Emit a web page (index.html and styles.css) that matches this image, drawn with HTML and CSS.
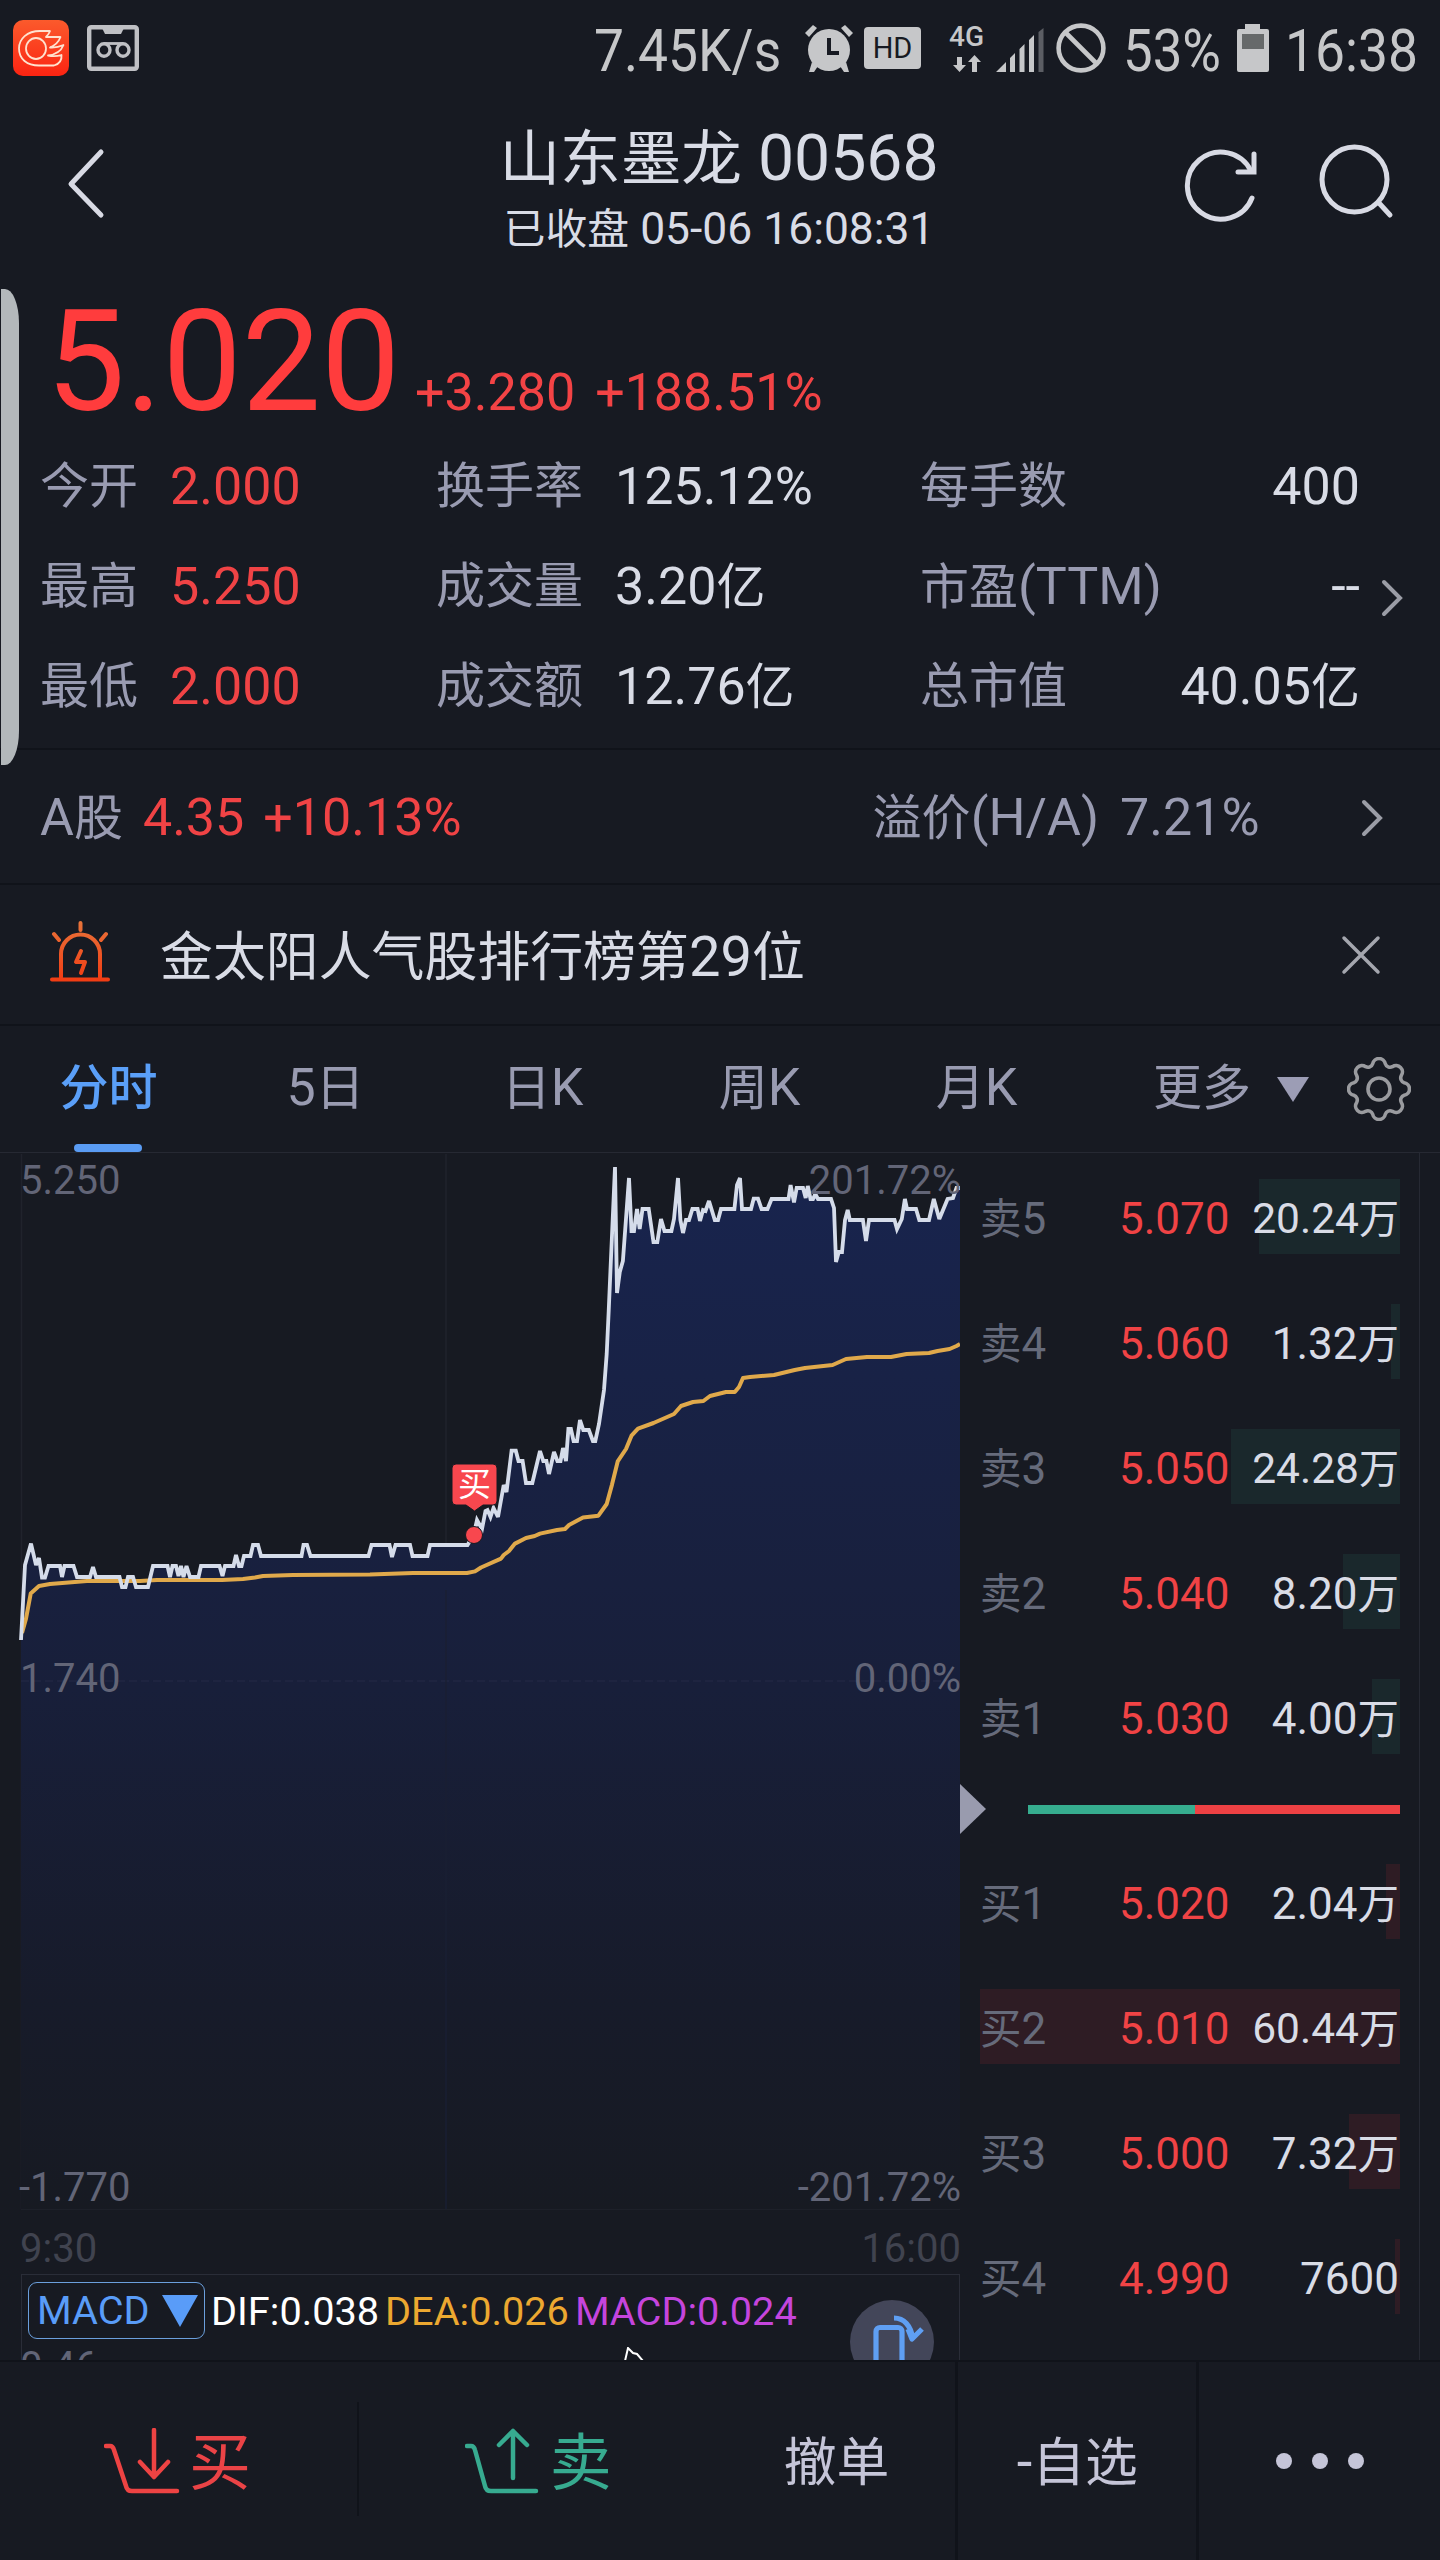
FILE: index.html
```html
<!DOCTYPE html>
<html lang="zh-CN">
<head>
<meta charset="utf-8">
<title>山东墨龙 00568</title>
<link rel="stylesheet" href="styles.css">
</head>
<body>
<div class="app">
  <div class="edge-handle"></div>

  <header class="status">
    <svg class="app-badge" width="56" height="56" viewBox="0 0 56 56">
      <defs><linearGradient id="badge" x1="0" y1="0" x2="0" y2="1"><stop offset="0" stop-color="#fb5a2c"/><stop offset="1" stop-color="#fb2412"/></linearGradient></defs>
      <rect width="56" height="56" rx="10" fill="url(#badge)"/>
      <g fill="none" stroke="#ffe2cf" stroke-width="1.8" stroke-linejoin="round">
        <path d="M37 11H27C14 11 6 19 6 28.500C6 39 14 45.500 26 45.500H41C46 44 49 40 48.500 35Q42 37 35 35.500Q47 34 50.500 25Q44 28 37 27.500Q45 24 47.500 17H33Q36 14 37 11Z"/>
        <ellipse cx="23" cy="28.500" rx="10" ry="10.500"/>
      </g>
    </svg>
    <svg class="recorder" width="52" height="46" viewBox="0 0 52 46" fill="none" stroke="#bfc0c4">
      <rect x="2.200" y="2.200" width="47.600" height="41.600" rx="2" stroke-width="4.400"/>
      <path d="M15 3h22l-3 6H18z" fill="#bfc0c4" stroke="none"/>
      <ellipse cx="17" cy="25" rx="6" ry="6.200" stroke-width="3.400"/><ellipse cx="36" cy="25" rx="6" ry="6.200" stroke-width="3.400"/>
      <path d="M17 18.500h19" stroke-width="2.800"/>
    </svg>
    <span class="sys speed">7.45K/s</span>
    <svg class="alarm" width="48" height="48" viewBox="0 0 48 48">
      <g fill="#c6c7c9"><circle cx="24" cy="26" r="21"/><path d="M0 9 8 1l4 3-8 9zM48 9l-8-8-4 3 8 9zM7 38l6 4-4 6H4zM41 38l-6 4 4 6h5z"/></g>
      <path d="M24 14v15h10" fill="none" stroke="#171a22" stroke-width="4"/>
    </svg>
    <span class="hd">HD</span>
    <span class="net"><span>4G</span>
      <svg width="28" height="17" viewBox="0 0 28 17" fill="#c6c7c9"><path d="M4 2h5v8h4L6.500 17 0 10h4zM19 17h5V7h4L21.500 0 15 7h4z"/></svg>
    </span>
    <svg class="signal" width="48" height="44" viewBox="0 0 48 44"><g fill="#c6c7c9"><path d="M0 44 10 34v10zM14 30l5-5v19h-5zM23.500 21l5-5v28h-5zM33 12l5-5v37h-5z"/><path d="M42.500 4l5-4v44h-5z" fill="#5c5e64"/></g></svg>
    <svg class="block" width="50" height="50" viewBox="0 0 50 50" fill="none" stroke="#c6c7c9" stroke-width="4.600"><circle cx="25" cy="25" r="22.400"/><path d="M9.500 9.500l31 31"/></svg>
    <span class="sys battery-text">53%</span>
    <svg class="battery" width="32" height="48" viewBox="0 0 32 48"><path d="M8 0h15v5h7q2 0 2 2v39q0 2-2 2H2q-2 0-2-2V7q0-2 2-2h6z" fill="#c6c7c9"/><path d="M5 10h22v15H5z" fill="#66696a"/></svg>
    <span class="sys clock">16:38</span>
  </header>

  <nav class="nav">
    <svg class="back" width="40" height="72" viewBox="0 0 40 72" fill="none" stroke="#d8dae4" stroke-width="5" stroke-linecap="round" stroke-linejoin="round"><path d="M35 4 5 36l30 31"/></svg>
    <div class="heading">
      <h1><span class="cn">山东墨龙</span> 00568</h1>
      <p><span class="cn">已收盘</span> 05-06 16:08:31</p>
    </div>
    <svg class="refresh" width="76" height="76" viewBox="0 0 76 76" fill="none" stroke="#d8dae4" stroke-width="5" stroke-linecap="round" stroke-linejoin="round"><path d="M69 52A33.500 33.500 0 1 1 68 25"/><path d="M71 8v18H55" stroke-linejoin="miter"/></svg>
    <svg class="search" width="76" height="76" viewBox="0 0 76 76" fill="none" stroke="#d8dae4" stroke-width="5" stroke-linecap="round"><circle cx="36.500" cy="36.500" r="32.500"/><path d="M61 60l11 12"/></svg>
  </nav>

  <section class="quote">
    <div class="price"><strong>5.020</strong><span>+3.280</span><span class="pct">+188.51%</span></div>
    <div class="stats">
      <span class="label cn">今开</span><span class="up">2.000</span><span class="label cn">换手率</span><span>125.12%</span><span class="label cn">每手数</span><span class="end">400</span>
      <span class="label cn">最高</span><span class="up">5.250</span><span class="label cn">成交量</span><span>3.20<span class="cn">亿</span></span><span class="label"><span class="cn">市盈</span>(TTM)</span><span class="end">--</span>
      <span class="label cn">最低</span><span class="up">2.000</span><span class="label cn">成交额</span><span>12.76<span class="cn">亿</span></span><span class="label cn">总市值</span><span class="end">40.05<span class="cn">亿</span></span>
    </div>
    <svg class="more-arrow" width="24" height="40" viewBox="0 0 24 40" fill="none" stroke="#9b9da6" stroke-width="4" stroke-linecap="round"><path d="M4 4l16 16L4 36"/></svg>
  </section>

  <section class="a-share">
    <span class="label">A<span class="cn">股</span></span>
    <span class="up a-price">4.35</span><span class="up a-pct">+10.13%</span>
    <span class="label premium"><span class="cn">溢价</span>(H/A)</span><span class="label premium-val">7.21%</span>
    <svg width="24" height="40" viewBox="0 0 24 40" fill="none" stroke="#9b9da6" stroke-width="4" stroke-linecap="round"><path d="M4 4l16 16L4 36"/></svg>
  </section>

  <section class="notice">
    <svg class="siren" width="62" height="62" viewBox="0 0 62 62" fill="none" stroke="url(#fire)" stroke-width="4" stroke-linecap="round">
      <defs><linearGradient id="fire" gradientUnits="userSpaceOnUse" x1="0" y1="0" x2="0" y2="62"><stop offset="0" stop-color="#e8743a"/><stop offset="1" stop-color="#f23a12"/></linearGradient></defs>
      <path d="M12 56V33a19.500 19.500 0 0 1 39 0v23M3 58.500h56M31.500 2l.01 7M5 13l5 6M57 13l-5 6"/>
      <path d="M32 30l-5 11h9l-4 11" stroke-width="4" stroke-linejoin="round"/>
    </svg>
    <span class="notice-text"><span class="cn">金太阳人气股排行榜第</span>29<span class="cn">位</span></span>
    <svg class="close" width="40" height="40" viewBox="0 0 40 40" stroke="#a4a6ae" stroke-width="3.500" stroke-linecap="round"><path d="M3 3l34 34M37 3 3 37"/></svg>
  </section>

  <div class="tabs">
    <span class="tab active"><span class="cn">分时</span></span>
    <span class="tab">5<span class="cn">日</span></span>
    <span class="tab"><span class="cn">日</span>K</span>
    <span class="tab"><span class="cn">周</span>K</span>
    <span class="tab"><span class="cn">月</span>K</span>
    <span class="tab more"><span class="cn">更多</span></span>
    <svg class="caret" width="32" height="25" viewBox="0 0 32 25"><path d="M0 0h32L16 25z" fill="#9c9db5"/></svg>
    <svg class="gear" width="64" height="64" viewBox="0 0 64 64" fill="none" stroke="#9a9b9f" stroke-width="3.600" stroke-linejoin="round">
      <path d="M57.200 25.700A6.400 6.400 0 0 1 57.200 38.300A5 5 0 0 0 54.300 45.400A6.400 6.400 0 0 1 45.400 54.300A5 5 0 0 0 38.300 57.200A6.400 6.400 0 0 1 25.700 57.200A5 5 0 0 0 18.600 54.300A6.400 6.400 0 0 1 9.700 45.400A5 5 0 0 0 6.800 38.300A6.400 6.400 0 0 1 6.800 25.700A5 5 0 0 0 9.700 18.600A6.400 6.400 0 0 1 18.600 9.700A5 5 0 0 0 25.700 6.800A6.400 6.400 0 0 1 38.300 6.800A5 5 0 0 0 45.400 9.700A6.400 6.400 0 0 1 54.300 18.600A5 5 0 0 0 57.200 25.700Z"/>
      <circle cx="32" cy="32" r="11"/>
    </svg>
  </div>

  <main class="board">
    <div class="charts">
      <svg class="timeline" width="960" height="1121" viewBox="0 1153 960 1121">
        <defs>
          <linearGradient id="area" gradientUnits="userSpaceOnUse" x1="0" y1="1167" x2="0" y2="2209"><stop offset="0" stop-color="#18244e"/><stop offset=".5" stop-color="#181f3a"/><stop offset=".8" stop-color="#171b2a"/><stop offset="1" stop-color="#171a22"/></linearGradient>
        </defs>
        <path d="M21.500 1154V2209M446 1154V2209M21 2209H960" fill="none" stroke="#20232c" stroke-width="1.500"/>
        <path id="price-area" fill="url(#area)" d="M21 1640 25 1565 31 1543.600 36 1565 39 1558 42 1577.500 45 1577.500 48.500 1566 60 1566 62 1577 64.500 1566 73.500 1566 77 1577 90 1577 93 1567 96 1577 119.500 1577 122 1587 125.500 1587 128 1577 133 1577 136 1587 148 1587 153 1566 167.500 1566 170 1577 172.500 1566 176 1566 178.500 1576 181 1566 183.500 1577 186.500 1566 190 1577 198.500 1577 201 1566 219.500 1566 222.500 1576 225 1566 233.500 1566 236 1555 239 1566 241.500 1566 244 1556 250.500 1556 253 1545 258 1545 261 1556 301.500 1556 303.500 1545 307 1545 310.500 1556 368.500 1556 371.500 1545 389.500 1545 392 1557 395.500 1545 410 1545 412.500 1556 427.500 1556 430 1545 467.500 1545 473.700 1535 477 1520 482 1529 485.500 1511 487.500 1510 490.500 1517 493.500 1508 498 1517 503.700 1485 506.500 1492 511.600 1450.700 515.800 1450.700 518.500 1461 522.600 1461 526 1483 532.300 1483 540 1451 543.300 1461 546.400 1461 549 1474 554 1452 557.400 1461 560.500 1461 563 1448 566 1461 568.400 1429 570.900 1429 573.600 1441 577 1441 580 1420 583.300 1430 588.800 1430 592.900 1441 595.300 1441 599 1424 604 1390 606.700 1354 608.700 1311 611 1258 615 1167 617 1293 619.800 1272 622.900 1261 629 1178 631.500 1231 634 1231 637 1209 639.700 1229 642.500 1209 648.700 1209 653.500 1242 657.300 1242 661 1219 664.500 1231 671.400 1231 674 1219 678 1178 680.400 1220 683 1233 686 1220 689 1220 692.400 1209 697.600 1209 700 1221 703 1210 705.500 1211 709 1201 714.800 1220 718 1220 721 1209 734.400 1209 737 1185 740 1178 742 1209 751 1209 753.700 1198.600 758 1198.600 761.600 1209 767.500 1209 771.600 1199 788.500 1199 790.600 1185 794 1202.500 796.700 1188 803 1188 805.700 1198 807.800 1186 810.500 1199 813 1199 815.300 1194 818 1199 831 1199 834 1208 836 1262 838.800 1252 842 1252 845 1220 847.700 1210 849.800 1220 862.900 1220 866 1241 869 1220 894.500 1220 897 1229 901.800 1219 904.900 1199 907 1209 916 1209 919.300 1220 929 1220 933.800 1199 939.300 1219 947.600 1199 953 1198 956.500 1188 960 1188V2209H21Z"/>
        <path d="M21 1681H960" stroke="#222844" stroke-width="2" stroke-dasharray="8 4" opacity=".6"/>
        <path d="M446 1590V2209" stroke="#1a1f33" stroke-width="1.500"/>
        <path fill="none" stroke="#e0a94b" stroke-width="4" stroke-linejoin="round" d="M22 1633 26 1618.600 30.700 1593.600 39 1586 50 1584 87 1581 140 1581 157 1580 222 1580 243 1579 255 1577.500 263 1576 293 1575 370 1574.600 413 1573 467 1573 475 1571.400 481 1567.500 501 1558.600 503.700 1555 509 1551 515 1543.600 526 1538 534.700 1536 540 1533.600 557 1530 565 1529 569 1525 583 1517.500 598.400 1515.700 606.700 1504 612 1484.600 617.700 1461.400 626 1449 631.500 1435.700 638 1428.600 653.500 1423 674 1414 681 1406 693 1402 703.400 1401 710 1396 726 1392 734.800 1392 739 1387 743 1378 750 1377 774 1375 794.700 1370 805 1368 832.600 1365 846 1359 867 1357 891 1357 906.600 1354 929 1353 937.600 1351 949.600 1349 956.500 1346 960 1344"/>
        <path fill="none" stroke="#d5dcea" stroke-width="3.800" stroke-linejoin="miter" stroke-miterlimit="3" d="M21 1640 25 1565 31 1543.600 36 1565 39 1558 42 1577.500 45 1577.500 48.500 1566 60 1566 62 1577 64.500 1566 73.500 1566 77 1577 90 1577 93 1567 96 1577 119.500 1577 122 1587 125.500 1587 128 1577 133 1577 136 1587 148 1587 153 1566 167.500 1566 170 1577 172.500 1566 176 1566 178.500 1576 181 1566 183.500 1577 186.500 1566 190 1577 198.500 1577 201 1566 219.500 1566 222.500 1576 225 1566 233.500 1566 236 1555 239 1566 241.500 1566 244 1556 250.500 1556 253 1545 258 1545 261 1556 301.500 1556 303.500 1545 307 1545 310.500 1556 368.500 1556 371.500 1545 389.500 1545 392 1557 395.500 1545 410 1545 412.500 1556 427.500 1556 430 1545 467.500 1545 473.700 1535 477 1520 482 1529 485.500 1511 487.500 1510 490.500 1517 493.500 1508 498 1517 503.700 1485 506.500 1492 511.600 1450.700 515.800 1450.700 518.500 1461 522.600 1461 526 1483 532.300 1483 540 1451 543.300 1461 546.400 1461 549 1474 554 1452 557.400 1461 560.500 1461 563 1448 566 1461 568.400 1429 570.900 1429 573.600 1441 577 1441 580 1420 583.300 1430 588.800 1430 592.900 1441 595.300 1441 599 1424 604 1390 606.700 1354 608.700 1311 611 1258 615 1167 617 1293 619.800 1272 622.900 1261 629 1178 631.500 1231 634 1231 637 1209 639.700 1229 642.500 1209 648.700 1209 653.500 1242 657.300 1242 661 1219 664.500 1231 671.400 1231 674 1219 678 1178 680.400 1220 683 1233 686 1220 689 1220 692.400 1209 697.600 1209 700 1221 703 1210 705.500 1211 709 1201 714.800 1220 718 1220 721 1209 734.400 1209 737 1185 740 1178 742 1209 751 1209 753.700 1198.600 758 1198.600 761.600 1209 767.500 1209 771.600 1199 788.500 1199 790.600 1185 794 1202.500 796.700 1188 803 1188 805.700 1198 807.800 1186 810.500 1199 813 1199 815.300 1194 818 1199 831 1199 834 1208 836 1262 838.800 1252 842 1252 845 1220 847.700 1210 849.800 1220 862.900 1220 866 1241 869 1220 894.500 1220 897 1229 901.800 1219 904.900 1199 907 1209 916 1209 919.300 1220 929 1220 933.800 1199 939.300 1219 947.600 1199 953 1198 956.500 1188 960 1188"/>
        <g stroke="#171a22" stroke-width="1"><path d="M456 1464H493q4 0 4 4V1501q0 4-4 4H483L474.500 1511 466 1505H456q-4 0-4-4V1468q0-4 4-4Z" fill="#f8474e"/><circle cx="474" cy="1535" r="8.500" fill="#f8474e"/></g>
        <text class="tag" x="474.500" y="1496">买</text>
        <g class="axis">
          <text x="20" y="1194">5.250</text><text x="20" y="1692">1.740</text><text x="19" y="2201">-1.770</text>
          <g text-anchor="end"><text x="961" y="1194">201.72%</text><text x="961" y="1692">0.00%</text><text x="961" y="2201">-201.72%</text></g>
        </g>
        <g class="axis time"><text x="20" y="2262">9:30</text><text x="961" y="2262" text-anchor="end">16:00</text></g>
      </svg>
      <div class="macd">
        <div class="macd-head">
          <span class="macd-select">MACD<svg width="36" height="32" viewBox="0 0 36 32"><path d="M0 0h36L18 32z" fill="#599cf8"/></svg></span>
          <span class="dif">DIF:0.038</span><span class="dea">DEA:0.026</span><span class="bar">MACD:0.024</span>
        </div>
        <div class="macd-scale">0.46</div>
        <svg class="macd-line" width="24" height="14" viewBox="0 0 24 14" fill="none" stroke="#fff" stroke-width="2"><path d="M2 14 5 1l5 5 4 1 6 7"/></svg>
        <svg class="rotate" width="84" height="84" viewBox="0 0 84 84"><circle cx="42" cy="42" r="42" fill="#434659"/><g fill="none" stroke="#5f9ff3" stroke-width="5.200" stroke-linejoin="round"><rect x="26" y="27.500" width="26" height="50" rx="4"/><path d="M44 18C54 18 61 26 62.500 38M58 29l4 10 10-10"/></g></svg>
      </div>
    </div>
    <div class="book">
      <svg class="fold" width="26" height="50" viewBox="0 0 26 50"><path d="M0 0 26 25 0 50z" fill="#999bae"/></svg>
      <div class="row sell"><i style="width:141px"></i><span class="side"><span class="cn">卖</span>5</span><span class="up">5.070</span><span class="vol tight">20.24<span class="cn">万</span></span></div>
      <div class="row sell"><i style="width:9px"></i><span class="side"><span class="cn">卖</span>4</span><span class="up">5.060</span><span class="vol">1.32<span class="cn">万</span></span></div>
      <div class="row sell"><i style="width:169px"></i><span class="side"><span class="cn">卖</span>3</span><span class="up">5.050</span><span class="vol tight">24.28<span class="cn">万</span></span></div>
      <div class="row sell"><i style="width:57px"></i><span class="side"><span class="cn">卖</span>2</span><span class="up">5.040</span><span class="vol">8.20<span class="cn">万</span></span></div>
      <div class="row sell"><i style="width:28px"></i><span class="side"><span class="cn">卖</span>1</span><span class="up">5.030</span><span class="vol">4.00<span class="cn">万</span></span></div>
      <div class="ratio"><b></b></div>
      <div class="row buy"><i style="width:14px"></i><span class="side"><span class="cn">买</span>1</span><span class="up">5.020</span><span class="vol">2.04<span class="cn">万</span></span></div>
      <div class="row buy"><i style="width:420px"></i><span class="side"><span class="cn">买</span>2</span><span class="up">5.010</span><span class="vol tight">60.44<span class="cn">万</span></span></div>
      <div class="row buy"><i style="width:51px"></i><span class="side"><span class="cn">买</span>3</span><span class="up">5.000</span><span class="vol">7.32<span class="cn">万</span></span></div>
      <div class="row buy"><i style="width:5px"></i><span class="side"><span class="cn">买</span>4</span><span class="up">4.990</span><span class="vol">7600</span></div>
    </div>
  </main>

  <footer class="toolbar">
    <div class="action buy-action">
      <svg width="76" height="66" viewBox="0 0 76 66" fill="none" stroke="#ee4343" stroke-width="4.500" stroke-linecap="round" stroke-linejoin="round"><path d="M2 18h4q3 0 4 4L22 58q1 5 6 5h45M50 2v47M36 34l14 15 14-15"/></svg>
      <span>买</span>
    </div>
    <div class="action sell-action">
      <svg width="76" height="66" viewBox="0 0 76 66" fill="none" stroke="#37ab90" stroke-width="4.500" stroke-linecap="round" stroke-linejoin="round"><path d="M2 18h4q3 0 4 4L20 58q1 5 6 5h45M48 50V3M34 17 48 3l14 14"/></svg>
      <span>卖</span>
    </div>
    <div class="tool cancel"><span class="cn">撤单</span></div>
    <div class="tool"><span>-<span class="cn">自选</span></span></div>
    <div class="tool dots"><i></i><i></i><i></i></div>
  </footer>
</div>
</body>
</html>
```
FILE: styles.css
```css
* { box-sizing: border-box; }
html, body { margin: 0; background: #171a22; }
body {
  font-family: Roboto, "Noto Sans CJK SC", sans-serif;
  font-weight: 400;
  font-size: 52px;
  color: #d9dce6;
}
svg { display: block; flex: none; }
.app { position: relative; width: 1440px; height: 2560px; overflow: hidden; display: flex; flex-direction: column; white-space: nowrap; }
.cn { font-size: .943em; }
span .cn, h1 .cn, p .cn { line-height: 0; }
.label { color: #999bb1; }
.up { color: #f04345; }

.edge-handle { position: absolute; left: 1px; top: 289px; width: 18px; height: 476px; background: #b3b8bb; border-radius: 0 14px 14px 0 / 0 34px 34px 0; }

/* system status bar */
.status { height: 100px; display: flex; align-items: flex-start; padding-left: 13px; color: #c6c7c9; }
.app-badge { margin-top: 20px; }
.recorder { margin: 25px 0 0 18px; }
.sys { font-size: 60px; line-height: 80px; margin-top: 11px; transform: scaleX(.89); transform-origin: 0 50%; }
.speed { width: 210px; margin-left: 455px; }
.alarm { margin: 24px 0 0 1px; }
.hd { width: 57px; height: 42px; margin: 27px 0 0 11px; border-radius: 4px; background: #c6c7c9; color: #171a22; font-size: 29px; line-height: 42px; text-align: center; }
.net { width: 36px; margin: 23px 0 0 28px; font-size: 28px; line-height: 28px; font-weight: 500; }
.net span { display: block; }
.net svg { margin: 4px 0 0 4px; }
.signal { margin: 28px 0 0 11px; }
.block { margin: 23px 0 0 12px; }
.battery-text { width: 110px; margin-left: 17px; transform: scaleX(.88); }
.battery { margin: 24px 0 0 4px; }
.clock { margin-left: 16px; }

/* title bar */
.nav { height: 180px; display: flex; position: relative; }
.back { margin: 48px 0 0 66px; }
.heading { width: 614px; margin-left: 306px; margin-right: 157px; padding-top: 22px; text-align: center; }
.heading h1 { margin: 0; font-size: 64.3px; font-weight: 400; line-height: 72px; }
.heading p { margin: 7px 0 0; font-size: 44.4px; line-height: 56px; }
.refresh { margin: 46px 0 0; }
.search { margin: 43px 0 0 59px; }

/* quote */
.quote { position: relative; height: 468px; }
.price { height: 156px; padding: 12px 0 0 46px; display: flex; align-items: baseline; color: #f34345; line-height: 140px; }
.price strong { font-size: 141px; font-weight: 400; color: #ff3c3d; width: 369px; }
.price .pct { margin-left: 20px; }
.stats { display: grid; grid-template-columns: 130px 266px 179px 305px 220px 220px; grid-auto-rows: 100px; line-height: 101px; padding-left: 40px; }
.stats .end { text-align: right; }
.more-arrow { position: absolute; left: 1380px; top: 298px; }

.a-share, .notice { display: flex; align-items: center; border-top: 2px solid #10131a; }
.a-share { height: 135px; padding: 2px 0 0 40px; }
.a-price { margin-left: 20px; }
.a-pct { margin-left: 19px; }
.premium { margin-left: auto; }
.premium-val { margin-left: 21px; width: 240px; }
.a-share svg { margin-right: 56px; }
.notice { height: 141px; padding-left: 49px; }
.siren { margin-bottom: 5px; }
.notice-text { font-size: 56.1px; line-height: 80px; padding-top: 5px; margin-left: 49px; }
.close { margin-left: auto; margin-right: 59px; }

/* period tabs */
.tabs { height: 129px; display: flex; align-items: center; border-top: 2px solid #10131a; border-bottom: 1px solid #262933; color: #999bb1; }
.tab { width: 217px; height: 126px; line-height: 123px; text-align: center; position: relative; }
.tab.active { color: #5a9ff8; font-weight: 500; }
.tab.active::after { content: ""; position: absolute; left: 74px; bottom: 0; width: 68px; height: 8px; border-radius: 4px; background: #5a9cf4; }
.tab.more { width: 96px; margin-left: 68px; }
.caret { margin-left: 28px; }
.gear { margin-left: 38px; }

/* chart and order book */
.board { height: 1207px; display: flex; overflow: hidden; }
.charts { width: 960px; }
.axis { font-size: 40px; fill: #626577; }
.axis.time { fill: #40434f; }
.tag { font-size: 33px; fill: #fff; text-anchor: middle; }
.macd { position: relative; height: 90px; margin-left: 21px; border: 1px solid #2a2d38; border-bottom: 0; }
.macd-head { display: flex; padding: 7px 0 0 6px; font-size: 39.7px; line-height: 60px; height: 64px; }
.macd-select { display: flex; align-items: center; width: 177px; height: 57px; border: 1px solid #6b9fdc; border-radius: 9px; padding-left: 8px; color: #599cf8; line-height: 58px; }
.macd-select svg { margin-left: 12px; }
.dif { margin-left: 6px; color: #fff; }
.dea { margin-left: 6px; color: #eca830; }
.bar { margin-left: 6px; color: #c545dd; }
.macd-scale { font-size: 40px; line-height: 56px; color: #626577; margin-left: -2px; }
.macd-line { position: absolute; left: 601px; top: 72px; }
.rotate { position: absolute; left: 828px; top: 25px; }

.book { position: relative; width: 460px; padding-top: 1px; border-right: 1px solid #262933; }
.fold { position: absolute; left: 0; top: 631px; }
.row { position: relative; height: 125px; line-height: 130px; font-size: 44px; display: grid; grid-template-columns: 139px 130px 1fr; padding: 0 20px 0 20px; }
.row > * { position: relative; }
.row i { position: absolute; right: 19px; top: 25px; height: 75px; }
.sell i { background: #1a282c; }
.buy i { background: #2e1c24; }
.side { color: #666b7b; }
.vol { text-align: right; }
.tight { font-size: 42.5px; }
.ratio { height: 60px; padding: 26px 19px 0 68px; }
.ratio b { display: block; height: 9px; background: linear-gradient(90deg, #36ad8f 167px, #ee4144 167px); }

/* bottom toolbar */
.toolbar { height: 200px; border-top: 2px solid #10131a; display: flex; font-size: 56px; color: #c5c5d8; }
.action { position: relative; width: 359px; display: flex; align-items: flex-start; padding: 66px 0 0 104px; font-size: 62px; }
.action span { margin-left: 9px; margin-top: 5px; line-height: 62px; }
.buy-action { color: #ea4346; }
.sell-action { color: #37ab90; padding-left: 106px; }
.buy-action::after { content: ""; position: absolute; right: 0; top: 40px; width: 2px; height: 114px; background: #10131a; }
.tool { width: 241px; border-right: 3px solid #10131a; line-height: 200px; text-align: center; }
.cancel { width: 241px; }
.cancel .cn { line-height: 200px; }
.dots { border: 0; display: flex; justify-content: center; gap: 20px; padding-top: 91px; }
.dots i { width: 16px; height: 16px; border-radius: 50%; background: #c5c5d8; }
```
